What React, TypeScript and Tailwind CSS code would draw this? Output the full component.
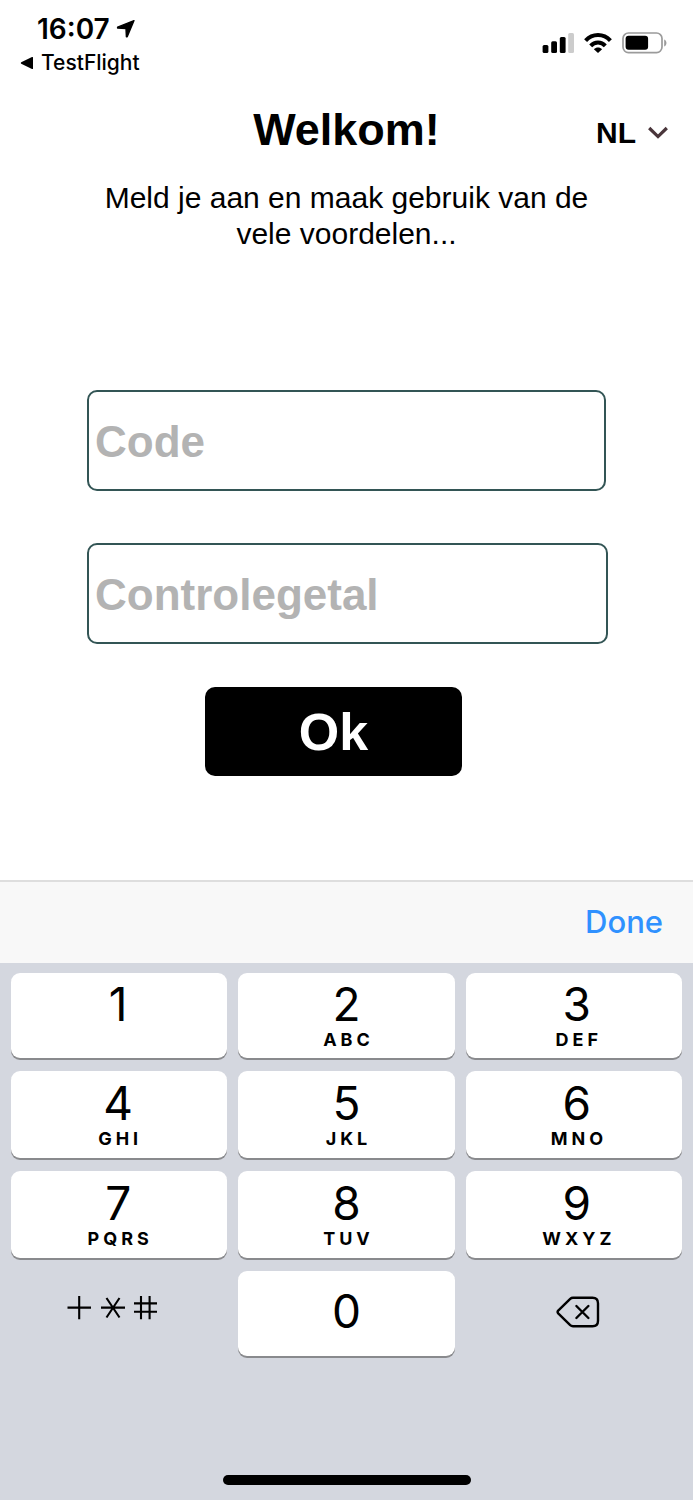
import React, {useState} from "react";
import clsx from "clsx";

interface KeyItem {
  digit: string;
  letters: string;
}

const keys: KeyItem[] = [
  {digit: "1", letters: ""},
  {digit: "2", letters: "ABC"},
  {digit: "3", letters: "DEF"},
  {digit: "4", letters: "GHI"},
  {digit: "5", letters: "JKL"},
  {digit: "6", letters: "MNO"},
  {digit: "7", letters: "PQRS"},
  {digit: "8", letters: "TUV"},
  {digit: "9", letters: "WXYZ"},
];

const StatusBar = () => (
  <div className="flex justify-between pl-5 pr-[26px] pt-3 font-['Inter',sans-serif] text-black">
    <div>
      <div className="flex items-center gap-1.5 pl-[17px]">
        <span className="text-[28px] leading-[34px] font-semibold">16:07</span>
        <svg width="20" height="20" viewBox="0 0 20 20" stroke="#000" strokeWidth="1.4" strokeLinejoin="round" aria-hidden="true">
          <path d="M18 1.6 L11.2 17.8 L10.4 17.8 L10 9.6 L1.6 9 L1.6 8.2 Z" />
        </svg>
      </div>
      <a href="#testflight" className="flex items-center gap-[7px] text-[21px] leading-[34px] font-medium">
        <svg width="14" height="14" viewBox="0 0 14 14" aria-hidden="true">
          <path d="M13 1.6 V12.4 Q13 13.4 12 12.9 L1.2 7.7 Q0.2 7 1.2 6.3 L12 1.1 Q13 0.6 13 1.6 Z" />
        </svg>
        TestFlight
      </a>
    </div>
    <div className="flex h-[62px] items-center gap-2.5">
      <svg width="32" height="20" viewBox="0 0 32 20" aria-hidden="true">
        <rect x="0.6" y="12" width="5.8" height="8" rx="1.5" />
        <rect x="9.2" y="8.3" width="5.8" height="11.7" rx="1.5" />
        <rect x="17.8" y="4" width="5.8" height="16" rx="1.5" />
        <rect x="26.2" y="0" width="5.8" height="20" rx="1.5" fill="#cccccc" />
      </svg>
      <svg width="28" height="20" viewBox="0 0 28 20" fill="none" stroke="#000" strokeWidth="4" aria-hidden="true">
        <path d="M1.6 7.6 C8.4 0.2 19.6 0.2 26.4 7.6" />
        <path d="M6.7 12.8 C10.7 8.4 17.3 8.4 21.3 12.8" />
        <path d="M14 20 L9.9 16.2 C12.2 14 15.8 14 18.1 16.2 Z" fill="#000" stroke="none" />
      </svg>
      <svg width="45" height="22" viewBox="0 0 45 22" aria-hidden="true">
        <rect x="1" y="1" width="39" height="19.6" rx="5.5" fill="none" stroke="#9b9b9b" strokeWidth="1.7" />
        <rect x="3.6" y="3.8" width="22.5" height="14" rx="3" />
        <path d="M42.2 7.4 C45.2 8.6 45.2 13.2 42.2 14.4 Z" fill="#9b9b9b" />
      </svg>
    </div>
  </div>
);

const Field = ({label, value, onChange, className}: {label: string; value: string; onChange: (value: string) => void; className?: string}) => (
  <input
    className={clsx(
      "h-[101px] rounded-[10px] border-2 border-[#335555] bg-white px-1.5 pt-0.5 text-[44px] font-bold text-black outline-none placeholder:text-[#b3b3b3]",
      className
    )}
    type="text"
    inputMode="numeric"
    aria-label={label}
    placeholder={label}
    value={value}
    onChange={(e) => onChange(e.target.value)}
  />
);

const Key = ({item, className, onPress}: {item: KeyItem; className?: string; onPress: (digit: string) => void}) => (
  <button
    type="button"
    className={clsx("flex flex-col items-center justify-center rounded-[9px] bg-white text-black shadow-[0_2px_0_#898a8d]", className)}
    onClick={() => onPress(item.digit)}
  >
    <span className="text-[46px] leading-[48px]">{item.digit}</span>
    {item.digit !== "0" && <span className="mt-0.5 h-5 pl-1 text-lg leading-5 font-bold tracking-[4px]">{item.letters}</span>}
  </button>
);

export default function App() {
  const [code, setCode] = useState("");
  const [control, setControl] = useState("");
  const [language, setLanguage] = useState("NL");

  const handlePress = (digit: string) => setCode(code + digit);
  const handleDelete = () => setCode(code.slice(0, -1));

  return (
    <div className="flex min-h-screen w-full flex-col bg-white font-['Liberation_Sans',Arial,sans-serif] text-black">
      <StatusBar />
      <main className="flex flex-col">
        <div className="grid grid-cols-[1fr_auto_1fr] items-center px-[25px] pt-6">
          <h1 className="col-start-2 text-[45px] leading-[52px] font-bold">Welkom!</h1>
          <div className="flex items-center gap-3 justify-self-end pt-1.5">
            <select
              className="appearance-none bg-transparent text-[30px] leading-9 font-bold outline-none"
              aria-label="Taal"
              value={language}
              onChange={(e) => setLanguage(e.target.value)}
            >
              <option value="NL">NL</option>
            </select>
            <svg width="20" height="14" viewBox="0 0 20 14" fill="none" stroke="#4a363b" strokeWidth="3.2" aria-hidden="true">
              <path d="M1.2 2 L10 10.6 L18.8 2" />
            </svg>
          </div>
        </div>
        <p className="px-[87px] pt-6 text-center text-[30px] leading-9">Meld je aan en maak gebruik van de vele voordelen...</p>
        <form className="flex flex-col pt-[138px] pr-[85px] pb-[104px] pl-[87px]" onSubmit={(e) => e.preventDefault()}>
          <Field className="mr-0.5" label="Code" value={code} onChange={setCode} />
          <Field className="mt-[52px]" label="Controlegetal" value={control} onChange={setControl} />
          <button type="submit" className="mt-[43px] mr-[146px] ml-[118px] h-[89px] rounded-[10px] bg-black text-[52px] leading-none font-bold text-white">
            Ok
          </button>
        </form>
      </main>
      <section className="flex grow flex-col bg-[#d4d7df] font-['Inter',sans-serif]">
        <div className="flex h-[83px] items-center justify-end border-t-2 border-[#dedede] bg-[#f8f8f8] pr-[30px] pb-0.5">
          <button type="button" className="text-[31px] leading-9 font-medium text-[#2f91ff]">
            Done
          </button>
        </div>
        <div className="grid grid-cols-3 grid-rows-[85px_87px_87px_85px] gap-x-[11px] gap-y-[13px] px-[11px] pt-2.5">
          {keys.map((item, index) => (
            <Key key={item.digit} item={item} className={clsx("pb-0.5", index % 3 === 0 && "pr-0.5", index % 3 === 2 && "pl-1.5")} onPress={handlePress} />
          ))}
          <button type="button" aria-label="Symbols" className="flex items-center justify-center pr-3 pb-3">
            <svg width="92" height="26" viewBox="0 0 92 26" fill="none" stroke="#000" strokeWidth="2.1">
              <path d="M0.5 12.6 H24 M12.2 1 V24.3" />
              <path d="M34 12.6 H58 M39.5 3 L52.5 22.5 M52.5 3 L39.5 22.5" />
              <path d="M67 8.4 H90 M67 16.8 H90 M74 1 V24.3 M82.6 1 V24.3" />
            </svg>
          </button>
          <Key item={{digit: "0", letters: ""}} className="pb-1.5" onPress={handlePress} />
          <button type="button" aria-label="Delete" className="flex items-center justify-center pb-1 pl-2" onClick={handleDelete}>
            <svg width="44" height="32" viewBox="0 0 44 32" fill="none" stroke="#000" strokeWidth="2.4" strokeLinecap="round" strokeLinejoin="round">
              <path d="M17 1.8 H36.5 Q42 1.8 42 7.3 V24.7 Q42 30.2 36.5 30.2 H17 Q15.4 30.2 14.2 29.1 L2.2 17.4 Q1 16 2.2 14.6 L14.2 2.9 Q15.4 1.8 17 1.8 Z" />
              <path d="M20.4 10 L32.4 22 M32.4 10 L20.4 22" />
            </svg>
          </button>
        </div>
        <div className="mt-auto flex justify-center pb-[15px]">
          <div className="h-2.5 w-[248px] rounded-full bg-black" />
        </div>
      </section>
    </div>
  );
}
